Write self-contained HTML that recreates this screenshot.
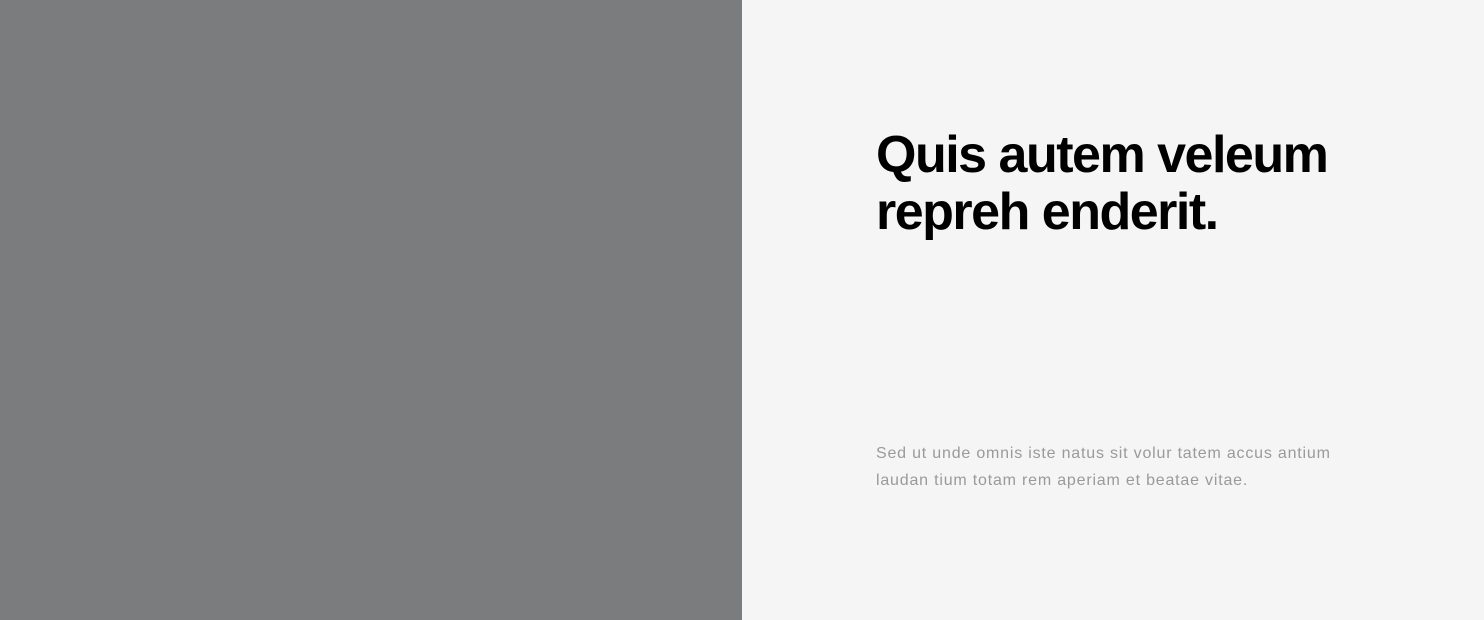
<!DOCTYPE html>
<html><head><style>
body{margin:0;width:1484px;height:620px;overflow:hidden;background:#f5f5f5;font-family:"Liberation Sans",sans-serif}
.l{position:absolute;left:0;top:0;width:742px;height:620px;background:#7b7c7e}
h1{position:absolute;left:876px;top:127px;margin:0;font-size:52px;line-height:57px;font-weight:bold;letter-spacing:-1.5px;color:#000;white-space:nowrap}
p{position:absolute;left:876px;top:440px;margin:0;font-size:16px;line-height:27px;color:#9a9a9a;letter-spacing:0.8px;white-space:nowrap}
</style></head><body>
<div class="l"></div>
<h1>Quis autem veleum<br>repreh enderit.</h1>
<p>Sed ut unde omnis iste natus sit volur tatem accus antium<br>laudan tium totam rem aperiam et beatae vitae.</p>
</body></html>
